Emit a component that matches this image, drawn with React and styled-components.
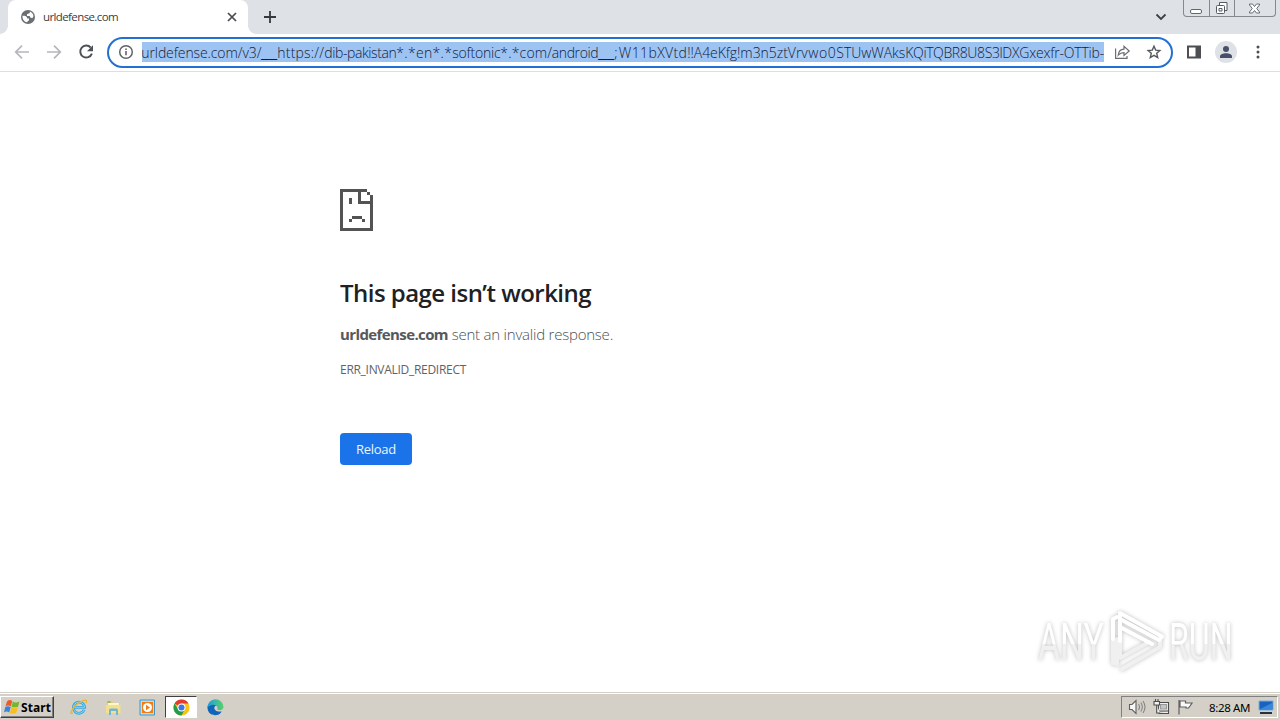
import React, { useLayoutEffect, useRef, useState } from "react";
import styled, { createGlobalStyle } from "styled-components";

const GlobalStyle = createGlobalStyle`
  * { box-sizing: border-box; }
  html, body { margin: 0; padding: 0; overflow: hidden; background: #fff; }
  body { font-family: "Open Sans", "Noto Sans", sans-serif; }
  svg { display: block; flex: none; }
`;

const Desktop = styled.div`
  position: relative;
  width: 1280px;
  height: 720px;
  display: flex;
  flex-direction: column;
  overflow: hidden;
`;

const FitBox = styled.span`
  display: inline-block;
  white-space: pre;
  width: ${(p) => p.$width}px;
  ${(p) => p.$rule && 'font-family: "Liberation Sans", sans-serif;'}
`;

/* Text tracked so that it fills a known advance width. */
function Fit({ width, rule, children }) {
  const ref = useRef(null);
  const [spacing, setSpacing] = useState(0);
  useLayoutEffect(() => {
    const natural = ref.current.getBoundingClientRect().width;
    setSpacing((width - natural) / children.length);
  }, [width, children]);
  return (
    <FitBox $width={width} $rule={rule}>
      <span ref={ref} style={{ letterSpacing: spacing }}>{children}</span>
    </FitBox>
  );
}

/* ---------- tab strip ---------- */
const TabStrip = styled.header`
  height: 34px;
  background: #dee1e6;
  display: flex;
  align-items: flex-start;
  padding-left: 8px;
`;
const Tab = styled.div`
  position: relative;
  width: 240px;
  height: 34px;
  padding: 0 10px 0 13px;
  display: flex;
  align-items: center;
  background: #fff;
  border-radius: 8px 8px 0 0;
  font-size: 11.5px;
  color: #3c4043;
  &::before, &::after {
    content: "";
    position: absolute;
    bottom: 0;
    width: 8px;
    height: 8px;
  }
  &::before { left: -8px; background: radial-gradient(circle at 0 0, transparent 7.5px, #fff 8px); }
  &::after { right: -8px; background: radial-gradient(circle at 100% 0, transparent 7.5px, #fff 8px); }
`;
const TabTitle = styled.div`
  flex: 1;
  margin: -1px 0 0 8px;
`;
const NewTab = styled.div`
  margin: 10px 0 0 15px;
`;
const TabSearch = styled.div`
  margin: 13px 16px 0 auto;
`;
const WindowControls = styled.div`
  display: flex;
  width: 93px;
  height: 17px;
  margin-right: 4px;
  border: 1px solid #85888e;
  border-top: 0;
  border-radius: 0 0 4px 4px;
`;
const WindowButton = styled.div`
  width: ${(p) => p.$width}px;
  display: flex;
  align-items: center;
  justify-content: center;
  & + & { border-left: 1px solid #85888e; }
`;

/* ---------- toolbar ---------- */
const Toolbar = styled.div`
  height: 38px;
  background: #fff;
  border-bottom: 1px solid #dcdee1;
  display: flex;
  align-items: center;
  padding: 0 14px 1px 14px;
`;
const NavIcons = styled.div`
  display: flex;
  gap: 16px;
  width: 93px;
`;
const AddressBar = styled.div`
  width: 1066px;
  height: 31px;
  border: 2px solid #2370d2;
  border-radius: 16px;
  display: flex;
  align-items: center;
  padding: 0 9px;
`;
const Url = styled.div`
  width: 962px;
  height: 20px;
  margin: 0 10px 0 8px;
  background: #9dc3f2;
  color: #10203c;
  display: flex;
  font-size: 14px;
  font-weight: 300;
  line-height: 21px;
  overflow: hidden;
  flex: none;
  & > :first-child { margin-left: -0.7px; }
`;
const ActionIcons = styled.div`
  display: flex;
  gap: 15px;
`;
const SideIcons = styled.div`
  display: flex;
  align-items: center;
  margin-left: auto;
  gap: 13px;
`;
const Avatar = styled.div`
  width: 22px;
  height: 22px;
  border-radius: 50%;
  background: #dee1e6;
  display: flex;
  align-items: center;
  justify-content: center;
`;

/* ---------- error page ---------- */
const Page = styled.main`
  flex: 1;
  padding: 117px 0 0 340px;
  color: #5f6368;
`;
const Title = styled.h1`
  margin: 47px 0 0;
  font-size: 24px;
  line-height: 30px;
  font-weight: 600;
  color: #202124;
`;
const Message = styled.p`
  margin: 15px 0 0;
  font-size: 15px;
  line-height: 22px;
  font-weight: 300;
  color: #4c4f53;
  & b { font-weight: 700; color: #55585c; }
`;
const ErrorCode = styled.div`
  margin-top: 16px;
  font-size: 12px;
  line-height: 18px;
`;
const ReloadButton = styled.button`
  display: flex;
  align-items: center;
  justify-content: center;
  margin-top: 54px;
  width: 72px;
  height: 32px;
  padding: 0;
  border: 0;
  border-radius: 4px;
  background: #1a73e8;
  color: #e8f8ff;
  font: 13px "Open Sans", sans-serif;
`;

/* ---------- watermark ---------- */
const Watermark = styled.div`
  position: absolute;
  left: 1038px;
  top: 608px;
  width: 196px;
  height: 66px;
  display: flex;
  align-items: center;
  justify-content: space-between;
  filter: drop-shadow(0 0 2px rgba(0, 0, 0, 0.26));
`;
const WatermarkWord = styled.div`
  width: ${(p) => p.$width}px;
  height: 50px;
  padding-top: 2px;
  font: 400 51px/50px Roboto, sans-serif;
  white-space: nowrap;
  & > span {
    display: inline-block;
    transform: scaleX(${(p) => p.$scale});
    transform-origin: 0 0;
    background: linear-gradient(#fff 52%, #f0f0f0 52%);
    background-clip: text;
    color: transparent;
  }
`;

/* ---------- taskbar ---------- */
const Taskbar = styled.footer`
  height: 28px;
  background: #d4d0c8;
  border-top: 1px solid #d4d0c8;
  box-shadow: inset 0 1px #fff;
  display: flex;
  align-items: center;
  padding: 1px 2px 0 0;
  color: #000;
`;
const StartButton = styled.div`
  width: 54px;
  height: 22px;
  display: flex;
  align-items: center;
  gap: 1px;
  padding-left: 3px;
  border: 1px solid;
  border-color: #fff #404040 #404040 #fff;
  box-shadow: inset -1px -1px #808080;
  font: 700 12px "Noto Sans", sans-serif;
`;
const QuickLaunch = styled.div`
  display: flex;
  align-items: center;
  margin-left: 8px;
`;
const TaskItem = styled.div`
  width: ${(p) => (p.$active ? 32 : 34)}px;
  height: 22px;
  margin-left: ${(p) => (p.$active ? 1 : 0)}px;
  margin-right: ${(p) => (p.$active ? 1 : 0)}px;
  display: flex;
  align-items: center;
  justify-content: center;
  background: ${(p) => (p.$active ? "#fff" : "transparent")};
  border: 1px solid;
  border-color: ${(p) => (p.$active ? "#404040 #fff #fff #404040" : "transparent")};
`;
const Tray = styled.div`
  margin-left: auto;
  width: 157px;
  height: 22px;
  display: flex;
  align-items: center;
  padding-left: 6px;
  gap: 7px;
  border: 1px solid;
  border-color: #808080 #fff #fff #808080;
`;
const Clock = styled.div`
  margin-left: 8px;
  font: 11.5px "Noto Sans", sans-serif;
`;

const URL_PARTS = [
  ["urldefense.com/v3/", 120],
  ["__", 16, true],
  ["https://", 47],
  ["dib-pakistan", 72],
  ["*.*en*.*", 56],
  ["softonic", 48],
  ["*.*com", 47],
  ["/android", 51],
  ["__", 16, true],
  [";", 4.500],
  ["W11bXVtd", 68.500],
  ["!!A4eKfg!", 53],
  ["m3n5ztVr", 61],
  ["vwo0", 35],
  ["STUwWAks", 69],
  ["KQiTQBR8U8S3l", 97],
  ["DXGxexfr-OTTib-", 101.700],
];

const Globe = () => (
  <svg width="14" height="14" viewBox="0 0 14 14">
    <circle cx="7" cy="7" r="7" fill="#6b6e72" />
    <path d="M1.500 5.800C3 5.800 6 5.500 6.200 8.500H8V10.300L5.800 12.300C3 11.800 1.200 9 1.500 5.800ZM8.800 1.600C10.800 2.300 12.300 4 12.500 6.300L11.300 8.200 9.300 7.500 8.700 6H6V4.300L8.800 3Z" fill="#fff" />
  </svg>
);
const Arrow = ({ flip }) => (
  <svg width="16" height="16" viewBox="0 0 16 16" fill="none" stroke="#b4b7bb" strokeWidth="1.700">
    <path d={flip ? "M1 8H14M8 1.700 14.300 8 8 14.300" : "M15 8H2M8 1.700 1.700 8 8 14.300"} />
  </svg>
);
const Reload = () => (
  <svg width="16" height="16" viewBox="0 0 16 16">
    <path d="M12.700 3.500A6 6 0 1 0 13.900 9.600" fill="none" stroke="#4d5156" strokeWidth="1.900" />
    <path d="M15 1.300v5.900H9Z" fill="#4d5156" />
  </svg>
);
const Info = () => (
  <svg width="16" height="16" viewBox="0 0 16 16">
    <circle cx="8" cy="8" r="6.300" fill="none" stroke="#5f6368" strokeWidth="1.500" />
    <path d="M7.200 7h1.600v4.300H7.200ZM7.200 4.400h1.600V6H7.200Z" fill="#5f6368" />
  </svg>
);
const Share = () => (
  <svg width="17" height="16" viewBox="0 0 17 16" fill="none" stroke="#696d72" strokeWidth="1.200">
    <path d="M1.600 4.500V14.300H13V12M4.200 11.200C4.500 7.500 6.500 5.300 10 5.100V2.300L15.200 7 10 11.500V8.700C7.500 8.700 5.700 9.500 4.200 11.200Z" />
  </svg>
);
const Star = () => (
  <svg width="16" height="16" viewBox="0 0 16 16" fill="none" stroke="#54585d" strokeWidth="1.400">
    <path d="M8 2.200 9.700 6.100l4.200.4-3.200 2.800 1 4.200L8 11.300l-3.700 2.200 1-4.200-3.200-2.800L6.300 6.100Z" />
  </svg>
);

const SadFile = () => (
  <svg width="33" height="42" viewBox="0 0 33 42" fill="#535353" shapeRendering="crispEdges">
    <path d="M0 0H27V3H21V12H30V6H33V42H0ZM3 3V39H30V15H18V3Z" fillRule="evenodd" />
    <path d="M27 3h3v3h-3ZM9 9h3v6H9ZM12 27h10v3H12ZM9 30h3v3H9ZM22 30h3v3h-3Z" />
  </svg>
);

const PlayMark = () => (
  <svg width="56" height="64" viewBox="0 0 56 64" fill="none" strokeLinejoin="round" strokeLinecap="round">
    <path d="M4 30V54L8 55V30M13 60 51 38V32M11 30V49L40 33" stroke="#f0f0f0" strokeWidth="4" />
    <path d="M4 30V10L8 8M11 32V4L53 27.500 50 31 11 10M11 18 43 35" stroke="#fff" strokeWidth="4" />
  </svg>
);

const WindowsFlag = () => (
  <svg width="16" height="16" viewBox="0 0 16 16">
    <path d="M3 2.500Q5.500 0 8.300 2L6.900 7.300Q4.200 5.500 1.500 7.300Z" fill="#ef5b24" />
    <path d="M8.900 2.500Q11.500 4.500 15.500 2.500L14 7.700Q10.500 9 7.500 7.700Z" fill="#74b72b" />
    <path d="M1.300 8Q4 6.500 6.700 8L5.200 13.500Q2.700 11.500 0 13.300Z" fill="#3986d8" />
    <path d="M7.300 8.300Q10.300 10 13.800 8.300L12.300 13.700Q8.800 15.500 5.900 13.900Z" fill="#f8be20" />
  </svg>
);
const Explorer = () => (
  <svg width="18" height="18" viewBox="0 0 18 18" fill="none">
    <path d="M14.200 11.800A5.600 5.600 0 1 1 14.600 9.300H5" stroke="#3fa7dc" strokeWidth="2.800" />
    <path d="M14.200 11.800A5.600 5.600 0 1 1 14.600 9.300H5" stroke="#86d7f4" strokeWidth="1" />
    <path d="M2.700 14.700C-.5 17.500.7 12 6 7S18.500.1 16 5" stroke="#e8b532" strokeWidth="1.300" />
  </svg>
);
const Folder = () => (
  <svg width="17" height="17" viewBox="0 0 17 17">
    <path d="M2 2h5l1 2h7v11H1.500Z" fill="#e8ca68" />
    <path d="M3 4h11v3H3Z" fill="#fff6c5" />
    <path d="M1 6h14.500v8.500H1Z" fill="#f5df8d" />
    <path d="M4 16v-5q0-1.500 1.500-1.500h6q1.500 0 1.500 1.500v5h-2v-4H6v4Z" fill="#70b6d6" />
    <path d="M2.500 3h3" stroke="#50a35c" />
  </svg>
);
const Player = () => (
  <svg width="17" height="17" viewBox="0 0 17 17">
    <path d="M1 1h14.500v15H1Z" fill="#b9def2" stroke="#4795c1" />
    <path d="M3 3h11v11H3Z" fill="#f17d14" />
    <circle cx="8.500" cy="8.500" r="4.500" fill="#fff" />
    <path d="M7 5.800v5.400l4-2.700Z" fill="#f17d14" />
  </svg>
);
const Chrome = () => (
  <svg width="17" height="17" viewBox="0 0 18 18">
    <circle cx="9" cy="9" r="8.500" fill="#fbc116" />
    <path d="M9 9 1.600 4.800A8.500 8.500 0 0 1 16.400 4.800H9Z" fill="#e33b2e" />
    <path d="M1.600 4.800A8.500 8.500 0 0 0 9 17.500L12.500 11 5.500 11Z" fill="#269b4a" />
    <circle cx="9" cy="9" r="4.200" fill="#fff" />
    <circle cx="9" cy="9" r="3.200" fill="#3b78e7" />
  </svg>
);
const Edge = () => (
  <svg width="17" height="17" viewBox="0 0 18 18">
    <defs>
      <linearGradient id="edgeTop"><stop offset="0" stopColor="#1b9fe0" /><stop offset="1" stopColor="#5cd068" /></linearGradient>
    </defs>
    <path d="M.500 9C.500 3 7 3 10 6.500 6 8 7 14 15.500 13.300 13 18 7 18 4 16 1.500 14.300.500 11.500.500 9Z" fill="#1264b8" />
    <path d="M.500 9A8.500 8.500 0 0 1 17.500 8.500C17.500 11 15 12 12.500 11.700 10 11.500 11.500 10.500 11 8.700 10 5.500 4 5 .500 9Z" fill="url(#edgeTop)" />
  </svg>
);

const Volume = () => (
  <svg width="18" height="16" viewBox="0 0 18 16" fill="none" stroke="#606060" strokeWidth="1.100">
    <path d="M1.500 5.500H4L8 1.500v13L4 10.500H1.500Z" fill="#f7f7f7" />
    <path d="M10.500 5q2 3 0 6M12.800 3.500q3 4.500 0 9M15 2q4 6 0 12" stroke="#858585" />
  </svg>
);
const Network = () => (
  <svg width="17" height="16" viewBox="0 0 17 16" fill="#f2f2f2" stroke="#4e4e4e" strokeWidth="1.100">
    <path d="M5.500 3.500H15.500v8.500H5.500ZM5.500 14.500H15.500V12" />
    <path d="M7.500 5.500H13.500v4.500H7.500Z" fill="#c5c5c5" stroke="#999" />
    <path d="M1 2.500H6.500V6H1ZM2.500 0v2.500M5 0v2.500M3.700 6v8H7" />
  </svg>
);
const Flag = () => (
  <svg width="17" height="16" viewBox="0 0 17 16" fill="#fafafa" stroke="#606060" strokeWidth="1.200">
    <path d="M3 2h5.500v2H15L13 7l-1.500 2H9V8H3ZM2 1v14.500" />
  </svg>
);

export default function App() {
  return (
    <Desktop>
      <GlobalStyle />
      <TabStrip>
        <Tab>
          <Globe />
          <TabTitle><Fit width={75}>urldefense.com</Fit></TabTitle>
          <svg width="12" height="12" viewBox="0 0 12 12" stroke="#45494e" strokeWidth="1.700"><path d="m2 2 8 8M10 2l-8 8" /></svg>
        </Tab>
        <NewTab>
          <svg width="14" height="14" viewBox="0 0 14 14" stroke="#35383c" strokeWidth="1.800"><path d="M7 1v12M1 7h12" /></svg>
        </NewTab>
        <TabSearch>
          <svg width="12" height="8" viewBox="0 0 12 8" fill="none" stroke="#3c4043" strokeWidth="1.800"><path d="m1.500 1.500 4.500 4.500 4.500-4.500" /></svg>
        </TabSearch>
        <WindowControls>
          <WindowButton $width={25}>
            <svg width="13" height="14" viewBox="0 0 13 14"><rect x="0.500" y="8.500" width="11" height="4" rx="1.500" fill="#fff" stroke="#62666d" /></svg>
          </WindowButton>
          <WindowButton $width={25}>
            <svg width="13" height="14" viewBox="0 0 13 14" fill="#fff" stroke="#555960"><path d="M3.500 1.500H11v8H3.500Z" /><rect x="0.500" y="4.500" width="8" height="8" rx="1" /><path d="M3 7.500h3v2.500h-3Z" /></svg>
          </WindowButton>
          <WindowButton $width={41}>
            <svg width="13" height="13" viewBox="0 0 13 13" fill="#fff" stroke="#686c73"><path d="M.500 2h3l2 2.500L7.500 2h3v1L7.700 6.500l2.800 3.500v1h-3l-2-2.500-2 2.500h-3v-1l2.800-3.500L.500 3Z" /></svg>
          </WindowButton>
        </WindowControls>
      </TabStrip>

      <Toolbar>
        <NavIcons><Arrow /><Arrow flip /><Reload /></NavIcons>
        <AddressBar>
          <Info />
          <Url>
            {URL_PARTS.map(([text, width, rule], i) => <Fit key={i} width={width} rule={rule}>{text}</Fit>)}
          </Url>
          <ActionIcons><Share /><Star /></ActionIcons>
        </AddressBar>
        <SideIcons>
          <svg width="16" height="16" viewBox="0 0 16 16" fill="#4b4f54"><path d="M1 1.500H15V14.500H1ZM3 3.500v9H9.500v-9Z" fillRule="evenodd" /></svg>
          <Avatar>
            <svg width="14" height="14" viewBox="0 0 14 14" fill="#465069"><circle cx="7" cy="4" r="3" /><path d="M1 13v-1.500C1 9.500 4 8.300 7 8.300s6 1.200 6 3.200V13Z" /></svg>
          </Avatar>
          <svg width="16" height="16" viewBox="0 0 16 16" fill="#4b4f54"><circle cx="8" cy="3" r="1.500" /><circle cx="8" cy="8" r="1.500" /><circle cx="8" cy="13" r="1.500" /></svg>
        </SideIcons>
      </Toolbar>

      <Page>
        <SadFile />
        <Title><Fit width={251}>This page isn’t working</Fit></Title>
        <Message><b><Fit width={108}>urldefense.com</Fit></b><Fit width={165}> sent an invalid response.</Fit></Message>
        <ErrorCode><Fit width={126}>ERR_INVALID_REDIRECT</Fit></ErrorCode>
        <ReloadButton><Fit width={40}>Reload</Fit></ReloadButton>
      </Page>

      <Watermark>
        <WatermarkWord $width={66} $scale={0.66}><span>ANY</span></WatermarkWord>
        <PlayMark />
        <WatermarkWord $width={65} $scale={0.63}><span>RUN</span></WatermarkWord>
      </Watermark>

      <Taskbar>
        <StartButton><WindowsFlag /><Fit width={30}>Start</Fit></StartButton>
        <QuickLaunch>
          <TaskItem><Explorer /></TaskItem>
          <TaskItem><Folder /></TaskItem>
          <TaskItem><Player /></TaskItem>
          <TaskItem $active><Chrome /></TaskItem>
          <TaskItem><Edge /></TaskItem>
        </QuickLaunch>
        <Tray>
          <Volume /><Network /><Flag />
          <Clock><Fit width={41}>8:28 AM</Fit></Clock>
          <svg width="18" height="16" viewBox="0 0 18 16"><path d="M2 2h14v9H2Z" fill="#1763bd" stroke="#79adda" /><path d="m3 10 12-6v6Z" fill="#3788da" /><path d="M3 13h12v2H3Z" fill="#27323f" /></svg>
        </Tray>
      </Taskbar>
    </Desktop>
  );
}
